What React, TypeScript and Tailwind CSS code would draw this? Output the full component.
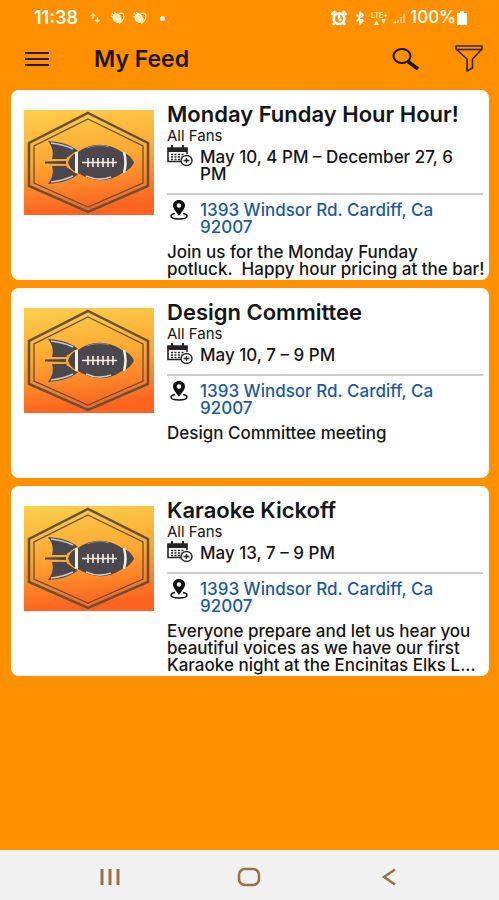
import { AlarmClock, Bluetooth } from 'lucide-react'

interface FeedEvent {
  title: string
  audience: string
  date: string
  address: string
  description: string
}

const events: FeedEvent[] = [
  {
    title: 'Monday Funday Hour Hour!',
    audience: 'All Fans',
    date: 'May 10, 4 PM – December 27, 6 PM',
    address: '1393 Windsor Rd. Cardiff, Ca 92007',
    description: 'Join us for the Monday Funday potluck.\u00a0\u00a0Happy hour pricing at the bar!',
  },
  {
    title: 'Design Committee',
    audience: 'All Fans',
    date: 'May 10, 7 – 9 PM',
    address: '1393 Windsor Rd. Cardiff, Ca 92007',
    description: 'Design Committee meeting',
  },
  {
    title: 'Karaoke Kickoff',
    audience: 'All Fans',
    date: 'May 13, 7 – 9 PM',
    address: '1393 Windsor Rd. Cardiff, Ca 92007',
    description:
      'Everyone prepare and let us hear you beautiful voices as we have our first Karaoke night at the Encinitas Elks L...',
  },
]

function HandIcon() {
  return (
    <svg viewBox="0 0 16 14" className="h-3.5 w-4" fill="none" stroke="#fff3d6" strokeWidth="1.2">
      <path d="M2 2 4 5M4.500 1 6 4M1 5l3 2" />
      <path d="M3 6c1-3 4-4 6-2l2 4c0 3-3 4-5 3S3 8 3 6Z" fill="#ffe9bd" />
      <path d="M9 2.500c3-1 5 0 5 3s-2 5-5 7" />
    </svg>
  )
}

function StatusBar() {
  return (
    <div className="flex h-9 items-center justify-between pr-[31px] pl-[34px] text-white">
      <div className="flex items-center">
        <span className="text-lg font-semibold">11:38</span>
        <svg viewBox="0 0 10 12" className="ml-3 h-3 w-2.5" fill="none" stroke="#ffe9bd" strokeWidth="1.500">
          <path d="M3 7V2M1 4l2-2 2 2M7.500 5v5M5.500 8l2 2 2-2" />
        </svg>
        <span className="ml-2.5 flex gap-1.5">
          <HandIcon />
          <HandIcon />
        </span>
        <span className="ml-3 h-[5px] w-[5px] rounded-full bg-white" />
      </div>
      <div className="flex items-center">
        <AlarmClock className="h-4 w-4" strokeWidth={4} />
        <Bluetooth className="ml-1.5 h-3.5 w-3.5" strokeWidth={3} />
        <span className="ml-1 flex flex-col items-center text-[7px] leading-[7px] font-bold text-[#ffe9bd]">
          LTE+
          <svg viewBox="0 0 12 6" className="h-1.5 w-3" fill="currentColor">
            <path d="M0 6h5L2.500 1ZM7 0h5L9.500 5Z" />
          </svg>
        </span>
        <svg viewBox="0 0 14 12" className="ml-1 h-3 w-3.5" fill="none" stroke="#ffd699">
          <path d="M1 11h3V9L1 11Z" fill="#ffe9bd" />
          <path d="M6 11V8M9 11V5M12 11V2" strokeWidth="1.500" />
        </svg>
        <span className="ml-1 text-[17px] font-medium">100%</span>
        <svg viewBox="0 0 12 14" className="h-3.5 w-3" fill="currentColor">
          <path d="M4 0h4v2h3v12H1V2h3Z" />
        </svg>
      </div>
    </div>
  )
}

function Header() {
  return (
    <header className="flex h-[54px] items-center pr-4 pb-2 pl-3">
      <button aria-label="Menu" className="px-3">
        <svg viewBox="0 0 26 16" className="h-4 w-[26px]" stroke="#2a1800" strokeWidth="2">
          <path d="M1 2h24M1 8h24M1 14h24" />
        </svg>
      </button>
      <h1 className="ml-8 flex-1 text-[23px] leading-7 font-semibold text-[#1f1400]">My Feed</h1>
      <button aria-label="Search" className="px-2">
        <svg viewBox="0 0 28 24" className="h-6 w-7" fill="none" stroke="#1a1000">
          <ellipse cx="10" cy="9" rx="8.500" ry="7" strokeWidth="2" />
          <path d="M16 14.500 26 22" strokeWidth="3.500" />
        </svg>
      </button>
      <button aria-label="Filter" className="ml-[27px]">
        <svg viewBox="0 0 28 28" className="h-7 w-7" fill="none" stroke="#3a2200" strokeWidth="1.600" strokeLinejoin="round">
          <path d="M1 1h26v3L17.500 14v9L12 26V14L1 4Z" />
          <path d="M2 4.500h24" />
        </svg>
      </button>
    </header>
  )
}

function TeamLogo() {
  return (
    <svg viewBox="0 0 130 105" className="h-[105px] w-[130px] shrink-0" role="img" aria-label="Football rocket logo">
      <defs>
        <linearGradient id="sunset" x1="0" y1="0" x2="0.15" y2="1">
          <stop offset="0" stopColor="#fcd04c" />
          <stop offset="0.5" stopColor="#fea832" />
          <stop offset="1" stopColor="#fd6420" />
        </linearGradient>
      </defs>
      <path d="M0 0h130v105H0Z" fill="url(#sunset)" />
      <g fill="none" stroke="#66503a">
        <path d="M64 3 124 33V76L64 102 5 76V33Z" strokeWidth="2.500" />
        <path d="M64 9 119 36V73L64 97 10 73V36Z" strokeWidth="1.300" />
      </g>
      <g fill="#4a484c">
        <path d="M24 31C36 32 46 34 54 41C49 42 46 46 43 49H28C30 42 28 36 24 31Z" />
        <path d="M24 74C36 73 46 71 54 64C49 63 46 59 43 56H28C30 63 28 69 24 74Z" />
      </g>
      <path d="M43 47.500 54 41V64L43 57.500 41 52.500Z" fill="#fea832" />
      <g fill="#4a484c">
        <path d="M27 49 43 50.500V54.500L27 56Z" fill="#fea832" />
        <path d="M21 51.500 42 51V54L21 53.500Z" />
        <path d="M44 52.500C46 47 49 44 52 43V62C49 61 46 58 44 52.500Z" />
        <path d="M54 42C68 32 84 33 98 42C104 44 108 48 110 52.500C108 57 104 61 98 63C84 73 68 72 54 63Z" />
      </g>
      <g fill="none" stroke="#f5eee4">
        <path d="M52.500 42V63" strokeWidth="3" />
        <path d="M100 42c2 7 2 14 0 21" strokeWidth="2.500" />
        <path d="M58 52.500H93M64 48v9M69 48v9M74 48v9M79 48v9M84 48v9M89 48v9" strokeWidth="1.600" />
        <path d="M27 33c9 1 16 3 22 6M27 72c9-1 16-3 22-6M62 66c9 4 17 4 25 1" stroke="#c9c6c4" strokeWidth="1.600" />
        <path d="M63 38c8-3 16-3 22-1" stroke="#8b898b" />
      </g>
    </svg>
  )
}

function CalendarIcon() {
  return (
    <svg viewBox="0 0 26 22" className="h-[22px] w-[26px]" fill="none" stroke="#242424" aria-hidden="true">
      <path d="M15 16.500H1V3h19v6" strokeWidth="1.600" />
      <path d="M1 3.500h19v3H1Z" fill="#242424" />
      <path d="M5 0v3M16 0v3" strokeWidth="2" />
      <path d="M4 9.500h13M4 12h11M4 14.500h10" strokeWidth="1.600" strokeDasharray="2 1.500" />
      <ellipse cx="19.500" cy="15.500" rx="5.500" ry="5" fill="white" strokeWidth="1.400" />
      <path d="M16.500 15.500h6M19.500 13v5" strokeWidth="1.500" />
    </svg>
  )
}

function PinIcon() {
  return (
    <svg viewBox="0 0 18 20" className="mx-[3px] h-5 w-[18px]" fill="none" stroke="#111" aria-hidden="true">
      <path d="M5 13.500C2 14 1 15 1 16c0 2 4 3 8 3s8-1 8-3c0-1-1-2-4-2.500" strokeWidth="1.500" />
      <path
        d="M9 0C5.500 0 3 2.300 3 5.500 3 9 6.500 12 9 16c2.500-4 6-7 6-10.500C15 2.300 12.500 0 9 0Zm0 3.300a2.300 2.200 0 1 1 0 4.400 2.300 2.200 0 0 1 0-4.400Z"
        fill="#111"
        stroke="none"
      />
    </svg>
  )
}

function EventCard({ event }: { event: FeedEvent }) {
  return (
    <article className="flex min-h-[190px] gap-[13px] rounded-lg bg-white pt-[11px] pr-1.5 pl-[13px] text-[#151515]">
      <div className="pt-[9px]">
        <TeamLogo />
      </div>
      <div className="min-w-0 flex-1">
        <h2 className="text-[22px] leading-[26px] font-semibold">{event.title}</h2>
        <p className="text-[15px] leading-[18px]">{event.audience}</p>
        <div className="mt-1 flex gap-[7px]">
          <span className="-mt-1 h-[21px] shrink-0">
            <CalendarIcon />
          </span>
          <p className="pr-4 text-[17px] leading-[17px] font-medium">{event.date}</p>
        </div>
        <hr className="mt-2.5 mb-[7px] border-t-2 border-[#cdcdcd]" />
        <div className="flex gap-[9px]">
          <span className="-mt-0.5 shrink-0">
            <PinIcon />
          </span>
          <a href="#map" className="pr-8 text-[17px] leading-[17px] font-medium text-[#1b5a9e]">
            {event.address}
          </a>
        </div>
        <p className="-mr-1.5 mt-2 text-[17px] leading-[17px] font-medium">{event.description}</p>
      </div>
    </article>
  )
}

function NavigationBar() {
  return (
    <nav className="grid h-[50px] grid-cols-3 place-items-center bg-[#f1f1f1] px-10 pt-1">
      <button aria-label="Recent apps">
        <svg viewBox="0 0 22 18" className="h-[18px] w-[22px]" stroke="#957448" strokeWidth="3">
          <path d="M3 1v16M11 1v16M19 1v16" />
        </svg>
      </button>
      <button aria-label="Home">
        <svg viewBox="0 0 24 20" className="h-5 w-6" fill="none" stroke="#957448" strokeWidth="2.500">
          <rect x="2" y="2" width="20" height="16" rx="6" />
        </svg>
      </button>
      <button aria-label="Back">
        <svg viewBox="0 0 16 18" className="h-[18px] w-4" fill="none" stroke="#957448" strokeWidth="2.500">
          <path d="M14 1.500 3 9l11 7.500" />
        </svg>
      </button>
    </nav>
  )
}

export default function App() {
  return (
    <div className="flex min-h-screen flex-col bg-[#ff9100] font-['Inter',sans-serif]">
      <StatusBar />
      <Header />
      <main className="flex flex-1 flex-col gap-2 pr-2.5 pl-[11px]">
        {events.map((event) => (
          <EventCard key={event.title} event={event} />
        ))}
      </main>
      <NavigationBar />
    </div>
  )
}
